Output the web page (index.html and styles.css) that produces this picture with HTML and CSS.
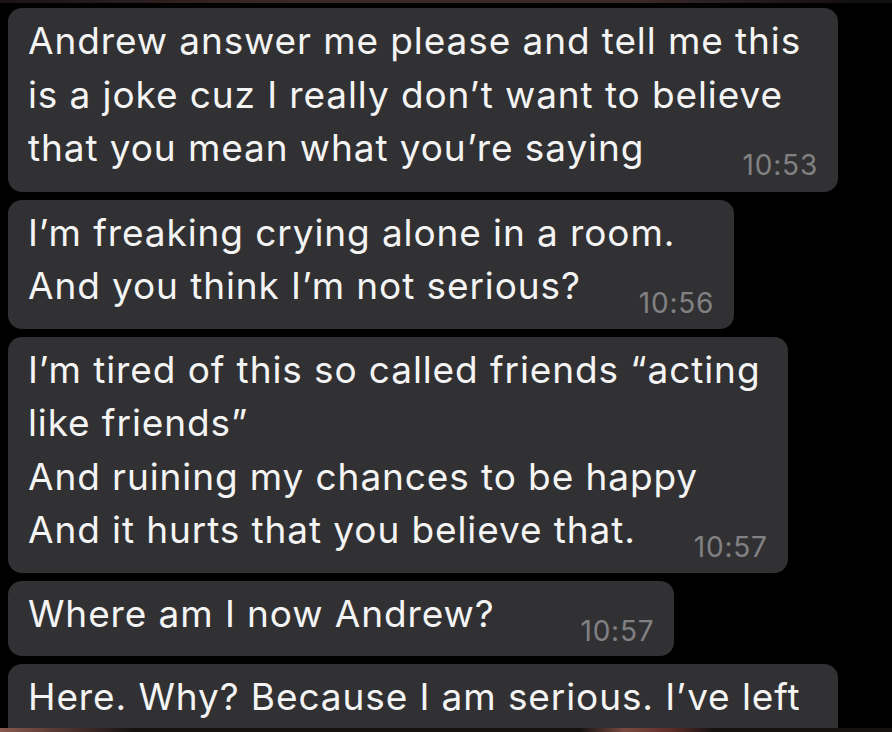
FILE: index.html
```html
<!DOCTYPE html>
<html lang="en">
<head>
<meta charset="utf-8">
<title>Messages</title>
<link rel="stylesheet" href="styles.css">
</head>
<body>
<div class="edge edge-top"></div>
<main class="chat">
  <div class="bubble wrapped">
    <p class="msg">Andrew answer me please and tell me this<br>is a joke cuz I really don’t want to believe</p>
    <div class="last"><span>that you mean what you’re saying</span><time class="time">10:53</time></div>
  </div>
  <div class="bubble">
    <p class="msg">I’m freaking crying alone in a room.</p>
    <div class="last"><span>And you think I’m not serious?</span><time class="time">10:56</time></div>
  </div>
  <div class="bubble">
    <p class="msg">I’m tired of this so called friends “acting<br>like friends”<br>And ruining my chances to be happy</p>
    <div class="last"><span>And it hurts that you believe that.</span><time class="time">10:57</time></div>
  </div>
  <div class="bubble">
    <div class="last"><span>Where am I now Andrew?</span><time class="time time-wide">10:57</time></div>
  </div>
  <div class="bubble wrapped">
    <p class="msg">Here. Why? Because I am serious. I’ve left</p>
  </div>
</main>
<div class="edge edge-bottom"></div>
</body>
</html>
```
FILE: styles.css
```css
html, body {
  margin: 0;
  padding: 0;
  background: #000;
  height: 100%;
  overflow: hidden;
}

body {
  font-family: Inter, "Noto Sans", "Liberation Sans", sans-serif;
  color: #f4f4f4;
  position: relative;
}

.chat {
  display: flex;
  flex-direction: column;
  align-items: flex-start;
  gap: 8px;
  padding: 8px 0 0 8px;
}

.bubble {
  background: #313133;
  border-radius: 14px;
  padding: 6px 20px 16px 20px;
  max-width: 830px;
  box-sizing: border-box;
  font-size: 37px;
  line-height: 53.5px;
  letter-spacing: 0.9px;
}

.bubble.wrapped {
  width: 830px;
  padding-bottom: 17px;
}

.msg {
  margin: 0;
  white-space: nowrap;
}

.last {
  display: flex;
  justify-content: space-between;
  align-items: baseline;
  white-space: nowrap;
}

.time {
  font-size: 28px;
  line-height: 1;
  letter-spacing: 0.8px;
  color: #818183;
  margin-left: 58px;
  position: relative;
  top: 14px;
}

.time-wide {
  margin-left: 86px;
}

.edge {
  position: absolute;
  left: 0;
  right: 0;
  height: 3px;
}

.edge-top {
  top: 0;
  background: linear-gradient(90deg, #1a1414 0%, #3a2626 30%, #3b2a2a 70%, #151010 95%);
}

.edge-bottom {
  bottom: 0;
  height: 4px;
  background: linear-gradient(90deg, #8a5a4e 0%, #5a3a34 6%, #151212 15%, #151212 65%, #7a4a40 70%, #602e28 75%, #161212 80%);
}
```
